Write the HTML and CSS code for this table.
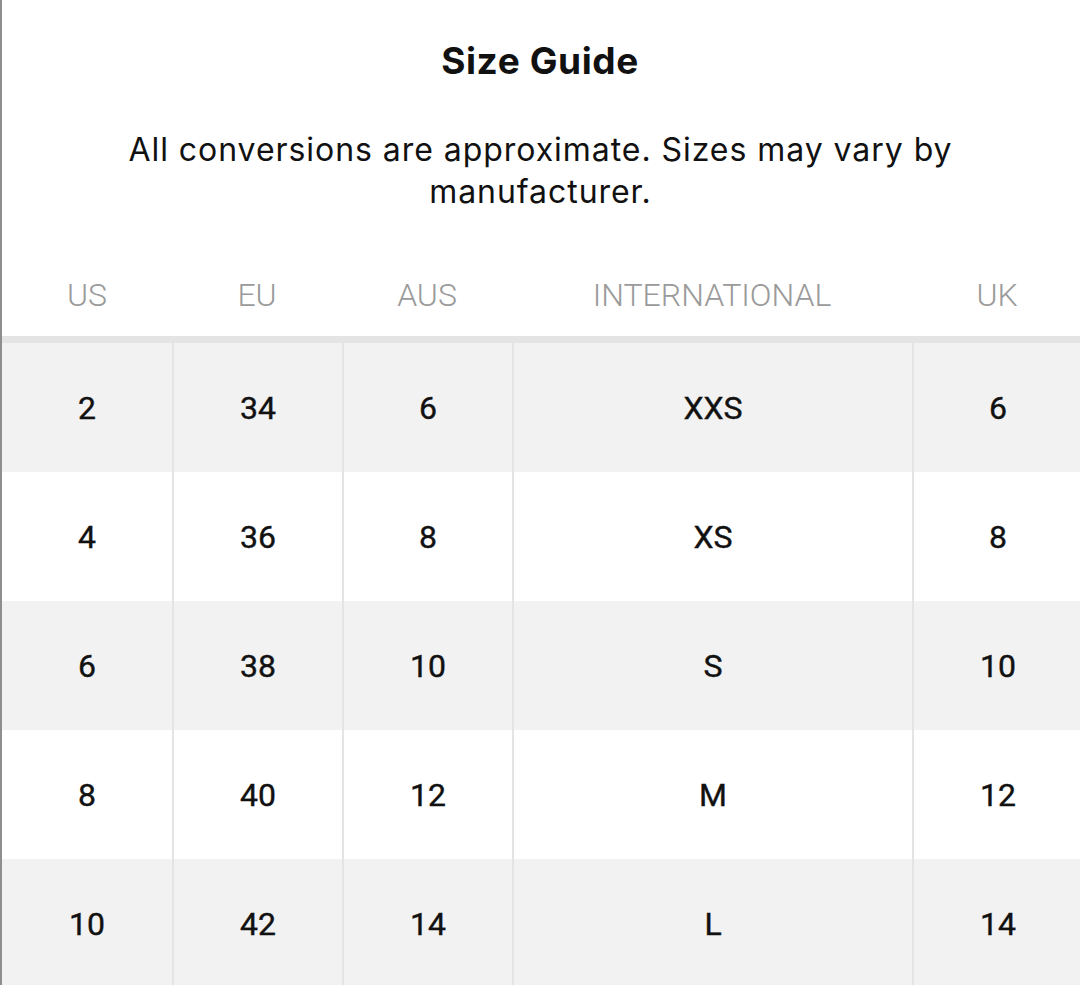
FILE: index.html
```html
<!DOCTYPE html>
<html lang="en">
<head>
<meta charset="utf-8">
<title>Size Guide</title>
<link rel="stylesheet" href="styles.css">
</head>
<body>
<div class="page">
  <div class="sheet">
    <h1 class="title">Size Guide</h1>
    <p class="note">All conversions are approximate. Sizes may vary by manufacturer.</p>
    <div class="table">
      <div class="row head">
        <div class="cell">US</div>
        <div class="cell">EU</div>
        <div class="cell">AUS</div>
        <div class="cell wide">INTERNATIONAL</div>
        <div class="cell">UK</div>
      </div>
      <div class="row shade">
        <div class="cell">2</div>
        <div class="cell">34</div>
        <div class="cell">6</div>
        <div class="cell wide">XXS</div>
        <div class="cell">6</div>
      </div>
      <div class="row">
        <div class="cell">4</div>
        <div class="cell">36</div>
        <div class="cell">8</div>
        <div class="cell wide">XS</div>
        <div class="cell">8</div>
      </div>
      <div class="row shade">
        <div class="cell">6</div>
        <div class="cell">38</div>
        <div class="cell">10</div>
        <div class="cell wide">S</div>
        <div class="cell">10</div>
      </div>
      <div class="row">
        <div class="cell">8</div>
        <div class="cell">40</div>
        <div class="cell">12</div>
        <div class="cell wide">M</div>
        <div class="cell">12</div>
      </div>
      <div class="row shade">
        <div class="cell">10</div>
        <div class="cell">42</div>
        <div class="cell">14</div>
        <div class="cell wide">L</div>
        <div class="cell">14</div>
      </div>
    </div>
  </div>
</div>
</body>
</html>
```
FILE: styles.css
```css
html, body {
  margin: 0;
  padding: 0;
  background: #ffffff;
  overflow: hidden;
}

.page {
  width: 1080px;
  height: 985px;
  overflow: hidden;
  border-left: 2px solid #8e8e8e;
  box-sizing: border-box;
}

.sheet {
  width: 1081px;
}

.title {
  margin: 39px 0 0;
  font-family: Inter, "Noto Sans", sans-serif;
  font-weight: 700;
  font-size: 37px;
  line-height: 44px;
  letter-spacing: 0.6px;
  text-align: center;
  color: #111111;
  padding-right: 5px;
}

.note {
  margin: 46px auto 0;
  width: 880px;
  padding-right: 4px;
  font-family: Inter, "Noto Sans", sans-serif;
  font-weight: 400;
  font-size: 32px;
  line-height: 42px;
  letter-spacing: 0.95px;
  text-align: center;
  color: #111111;
}

.table {
  margin-top: 41px;
  width: 1080px;
}

.row {
  display: grid;
  grid-template-columns: 170px 170px 170px 400px 170px;
  height: 129px;
  font-family: Roboto, "Liberation Sans", sans-serif;
  font-weight: 400;
  font-size: 32px;
  color: #111111;
  -webkit-text-stroke: 0.4px #111111;
}

.row.shade {
  background: #f2f2f2;
}

.cell {
  display: flex;
  align-items: center;
  justify-content: center;
  box-sizing: border-box;
  border-left: 2px solid #e4e4e4;
}

.cell:first-child {
  border-left: none;
}

.row.head {
  height: 89px;
  border-bottom: 7px solid #e4e4e4;
  box-sizing: border-box;
  font-weight: 300;
  color: #9a9a9a;
  -webkit-text-stroke: 0;
}

.row.head .cell {
  border-left: none;
}
```
